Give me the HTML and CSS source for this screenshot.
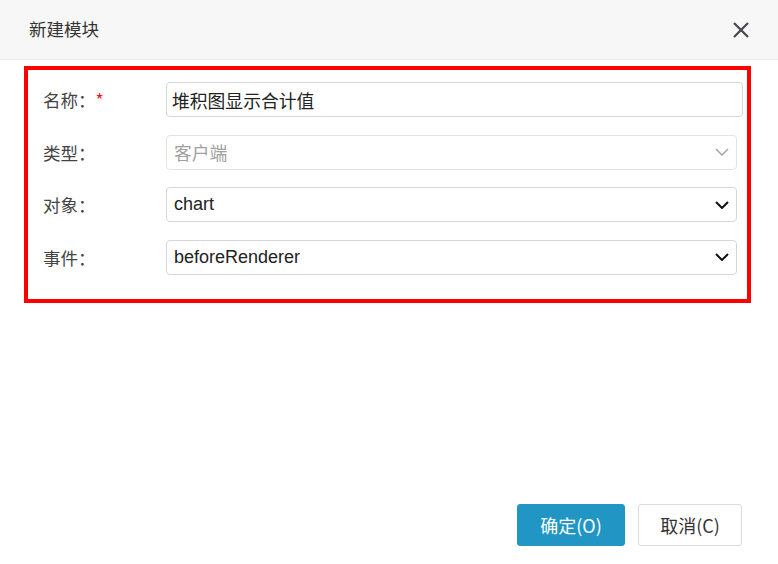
FILE: index.html
```html
<!DOCTYPE html>
<html lang="zh">
<head>
<meta charset="utf-8">
<link rel="stylesheet" href="styles.css">
</head>
<body>
<div class="dialog">
  <div class="header">
    <span class="title">新建模块</span>
    <svg class="close" width="18" height="18" viewBox="0 0 18 18"><path d="M2 2 L16 16 M16 2 L2 16" stroke="#45464f" stroke-width="2.2" fill="none"/></svg>
  </div>
  <div class="box">
    <div class="row">
      <div class="label">名称：<span class="req">*</span></div>
      <div class="field text">堆积图显示合计值</div>
    </div>
    <div class="row">
      <div class="label">类型：</div>
      <div class="field select disabled">客户端<svg class="chev" width="14" height="8" viewBox="0 0 14 8"><path d="M1 1 L7 7 L13 1" stroke="#a0a0a0" stroke-width="1.4" fill="none"/></svg></div>
    </div>
    <div class="row">
      <div class="label">对象：</div>
      <div class="field select">chart<svg class="chev" width="14" height="8" viewBox="0 0 14 8"><path d="M1 1 L7 7 L13 1" stroke="#111" stroke-width="2" fill="none"/></svg></div>
    </div>
    <div class="row">
      <div class="label">事件：</div>
      <div class="field select">beforeRenderer<svg class="chev" width="14" height="8" viewBox="0 0 14 8"><path d="M1 1 L7 7 L13 1" stroke="#111" stroke-width="2" fill="none"/></svg></div>
    </div>
  </div>
  <div class="footer">
    <button class="btn primary">确定(O)</button>
    <button class="btn">取消(C)</button>
  </div>
</div>
</body>
</html>
```
FILE: styles.css
```css
html, body { margin: 0; padding: 0; background: #fff; }
body { font-family: "Noto Sans CJK SC", "Liberation Sans", sans-serif; }
.dialog { width: 778px; height: 564px; display: flex; flex-direction: column; }
.header { height: 59px; background: #f7f7f7; border-bottom: 1px solid #e8e8e8; display: flex; align-items: center; justify-content: space-between; padding: 0 28px 0 29px; }
.title { font-size: 17.5px; color: #333; margin-top: -2px; }
.close { display: block; }
.box { box-sizing: border-box; margin: 6px 0 0 24px; width: 727px; border: 4px solid #ff0000; padding: 12px 0 24px 15px; display: flex; flex-direction: column; gap: 17.6px; }
.row { display: flex; align-items: center; height: 35px; }
.label { width: 123px; font-size: 17.5px; color: #444; }
.req { color: #e8141b; }
.field { box-sizing: border-box; height: 35px; border: 1px solid #d6d6d6; border-radius: 4px; display: flex; align-items: center; font-family: "Liberation Sans", "Noto Sans CJK SC", sans-serif; font-size: 18px; color: #222; }
.field.text { width: 577px; padding-left: 5px; font-family: "Noto Sans CJK SC", sans-serif; font-size: 17.8px; }
.field.select { width: 571px; padding: 0 7px; justify-content: space-between; }
.field.select.disabled { border-color: #e4e4e4; color: #a0a0a0; font-family: "Noto Sans CJK SC", sans-serif; font-size: 17.8px; }
.chev { display: block; }
.footer { margin-top: auto; display: flex; justify-content: flex-end; gap: 13px; padding: 0 36px 18px 0; }
.btn { height: 42px; border-radius: 3px; font-family: "Noto Sans CJK SC", sans-serif; font-size: 18px; padding: 0; border: 1px solid #dcdcdc; background: #fff; color: #333; width: 104px; }
.btn.primary { background: #2196c4; border-color: #2196c4; color: #fff; width: 108px; }
```
